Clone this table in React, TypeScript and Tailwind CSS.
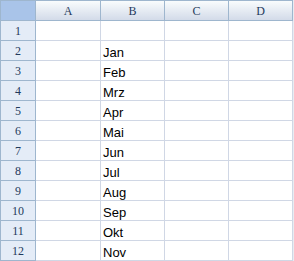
import React from 'react';

const COLS = ['A', 'B', 'C', 'D'];
const MONTHS = ['', 'Jan', 'Feb', 'Mrz', 'Apr', 'Mai', 'Jun', 'Jul', 'Aug', 'Sep', 'Okt', 'Nov'];

export default function App() {
  return (
    <div className="w-[294px] h-[261px] bg-[#e8ecf2] overflow-hidden">
      <div className="w-[293px] bg-white border-l border-t border-[#9eb6ce]">
        {/* header row */}
        <div className="flex h-[20px]">
          <div className="w-[35px] shrink-0 bg-[#a9c4e9] border-r border-b border-[#9eb6ce]" />
          {COLS.map(c => (
            <div
              key={c}
              className={`${c === 'A' ? 'w-[65px]' : 'w-[64px]'} shrink-0 flex items-center justify-center border-r border-b border-[#9eb6ce] bg-gradient-to-b from-[#f9fcfd] to-[#d3dbe9] text-[12px] text-[#1f3a5c] font-['Liberation_Serif',serif]`}
            >
              {c}
            </div>
          ))}
        </div>

        {MONTHS.map((m, i) => (
          <div key={i} className="flex h-[20px]">
            <div className="w-[35px] shrink-0 flex items-center justify-center bg-[#e4ecf7] border-r border-b border-[#9eb6ce] text-[12px] text-[#1f3a5c] font-['Liberation_Serif',serif]">
              {i + 1}
            </div>
            {COLS.map(c => (
              <div
                key={c}
                className={`${c === 'A' ? 'w-[65px]' : 'w-[64px]'} shrink-0 flex items-end pb-[1px] px-[2px] border-r border-b border-[#d0d7e5] text-[13px] text-black font-['Liberation_Sans',Arial,sans-serif] leading-none`}
              >
                {c === 'B' ? m : ''}
              </div>
            ))}
          </div>
        ))}
      </div>
    </div>
  );
}
